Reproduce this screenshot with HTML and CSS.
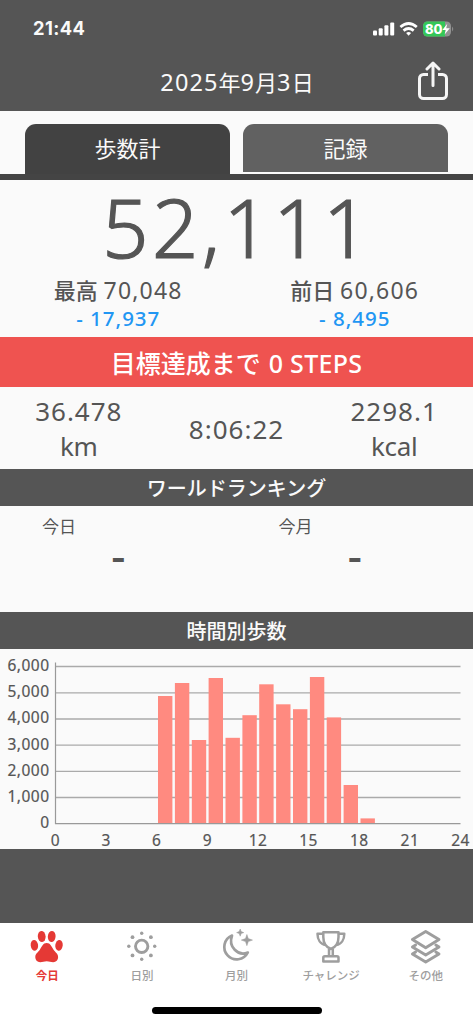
FILE: index.html
```html
<!DOCTYPE html>
<html lang="ja">
<head>
<meta charset="utf-8">
<meta name="viewport" content="width=device-width">
<title>歩数計</title>
<link rel="stylesheet" href="styles.css">
</head>
<body>
<div class="app">
  <header class="header">
    <div class="status">
      <span class="clock">21:44</span>
      <svg class="status-icons" viewBox="0 0 84 18" width="84" height="18">
        <g fill="#fff">
          <rect x="2" y="11.5" width="4" height="5" rx="1"/>
          <rect x="7.700" y="9.3" width="4" height="7.2" rx="1"/>
          <rect x="13.400" y="6.3" width="4" height="10.2" rx="1"/>
          <rect x="19.200" y="3.6" width="4" height="12.9" rx="1"/>
          <path d="M37.600 16.7l-2.5-2.7q2.5-1.9 5 0z"/>
        </g>
        <g fill="none" stroke="#fff" stroke-width="2.7">
          <path d="M29.400 8.1q8.200-7.200 16.400 0"/>
          <path d="M32.500 11.600q5.100-4.200 10.200 0"/>
        </g>
        <rect x="52" y="2.500" width="28" height="15" rx="4.500" fill="#929292"/>
        <path d="M56.500 2.500H74v15H56.500a4.500 4.500 0 0 1-4.500-4.500V7a4.500 4.500 0 0 1 4.500-4.500z" fill="#34c759"/>
        <path d="M81 7.500q2.500 2.500 0 5z" fill="#8c8c8c"/>
        <text x="54" y="14.900" class="battery-text" textLength="17.500" lengthAdjust="spacingAndGlyphs">80</text>
        <path d="M76.300 4.700l-5 6.200h3.500l-1.200 4.600 5.200-6.300h-3.600z" fill="#fff"/>
      </svg>
    </div>
    <div class="titlebar">
      <h1 class="date"><span class="n">2025</span>年<span class="n">9</span>月<span class="n">3</span>日</h1>
      <svg class="share" viewBox="0 0 32 40" width="32" height="40" fill="none" stroke="#f5f5f5" stroke-width="3" stroke-linecap="round" stroke-linejoin="round">
        <path d="M11 13.500H6.500a4 4 0 0 0-4 4V33.500a4 4 0 0 0 4 4h19a4 4 0 0 0 4-4V17.500a4 4 0 0 0-4-4H21" stroke-linecap="butt"/>
        <path d="M16 24.500V2.500M10 8l6-6 6 6"/>
      </svg>
    </div>
  </header>

  <nav class="tabs">
    <div class="tab active">歩数計</div>
    <div class="tab">記録</div>
  </nav>

  <section class="summary">
    <div class="total">52,111</div>
    <div class="compare">
      <div>
        <div class="cmp-main">最高 <span class="n">70,048</span></div>
        <div class="cmp-diff">- 17,937</div>
      </div>
      <div>
        <div class="cmp-main">前日 <span class="n">60,606</span></div>
        <div class="cmp-diff">- 8,495</div>
      </div>
    </div>
  </section>

  <div class="goal">目標達成まで<span class="n">0 STEPS</span></div>

  <section class="stats">
    <div>36.478<br><span class="unit">km</span></div>
    <div>8:06:22</div>
    <div>2298.1<br><span class="unit">kcal</span></div>
  </section>

  <h2 class="bar">ワールドランキング</h2>
  <section class="ranking">
    <div class="rank"><div class="rank-label">今日</div><div class="rank-value">-</div></div>
    <div class="rank"><div class="rank-label">今月</div><div class="rank-value">-</div></div>
  </section>

  <h2 class="bar">時間別歩数</h2>
  <section class="chart">
    <svg width="473" height="200" viewBox="0 649 473 200">
      <g stroke="#aaa" stroke-width="1.3">
        <path d="M55 666.500H460.500M55 692.800H460.500M55 719H460.500M55 745.200H460.500M55 771.400H460.500M55 797.500H460.500"/>
      </g>
      <g fill="#ff8a80">
        <rect x="158" y="696" width="14.400" height="127.500"/>
        <rect x="174.900" y="683" width="14.400" height="140.500"/>
        <rect x="191.800" y="740" width="14.400" height="83.500"/>
        <rect x="208.600" y="678" width="14.400" height="145.500"/>
        <rect x="225.500" y="737.800" width="14.400" height="85.700"/>
        <rect x="242.400" y="715.200" width="14.400" height="108.300"/>
        <rect x="259.200" y="684.300" width="14.400" height="139.200"/>
        <rect x="276.100" y="704.300" width="14.400" height="119.200"/>
        <rect x="293" y="709.200" width="14.400" height="114.300"/>
        <rect x="309.900" y="677" width="14.400" height="146.500"/>
        <rect x="326.700" y="717.400" width="14.400" height="106.100"/>
        <rect x="343.600" y="785" width="14.400" height="38.500"/>
        <rect x="360.500" y="818.400" width="14.400" height="5.100"/>
      </g>
      <path d="M55.500 662.500V823.600H460.500" fill="none" stroke="#999" stroke-width="1.200"/>
      <g class="axis" text-anchor="end">
        <text x="49.500" y="671">6,000</text>
        <text x="49.500" y="697.200">5,000</text>
        <text x="49.500" y="723.400">4,000</text>
        <text x="49.500" y="749.600">3,000</text>
        <text x="49.500" y="775.800">2,000</text>
        <text x="49.500" y="802">1,000</text>
        <text x="49.500" y="828.200">0</text>
      </g>
      <g class="axis" text-anchor="middle">
        <text x="55.500" y="845.700">0</text>
        <text x="106.100" y="845.700">3</text>
        <text x="156.700" y="845.700">6</text>
        <text x="207.400" y="845.700">9</text>
        <text x="258" y="845.700">12</text>
        <text x="308.600" y="845.700">15</text>
        <text x="359.300" y="845.700">18</text>
        <text x="409.900" y="845.700">21</text>
        <text x="460.500" y="845.700">24</text>
      </g>
    </svg>
  </section>

  <footer class="tabbar">
    <div class="items">
      <div class="item on">
        <svg viewBox="0 0 36 36" fill="#e53935">
          <ellipse cx="12.700" cy="8.500" rx="3.900" ry="5.600" transform="rotate(-5 12.700 8.500)"/>
          <ellipse cx="22.700" cy="8.500" rx="3.900" ry="5.600" transform="rotate(5 22.700 8.500)"/>
          <ellipse cx="5.400" cy="17.300" rx="3.700" ry="5.400" transform="rotate(-7 5.400 17.300)"/>
          <ellipse cx="30" cy="17.300" rx="3.700" ry="5.400" transform="rotate(7 30 17.300)"/>
          <path d="M17.700 15C14 15 12.800 18.500 11 21.500 9.300 24.200 6.300 25.500 6.300 29c0 3 2 5.200 4.900 5.200 2.500 0 4-1 6.500-1s4 1 6.500 1c2.900 0 4.900-2.200 4.900-5.200 0-3.500-3-4.800-4.700-7.500C22.600 18.500 21.400 15 17.700 15z"/>
        </svg>
        <span>今日</span>
      </div>
      <div class="item">
        <svg viewBox="0 0 36 36">
          <circle cx="17.700" cy="18.300" r="6.200" fill="none" stroke="#9e9e9e" stroke-width="2.900"/>
          <g fill="#9e9e9e">
            <circle cx="17.700" cy="5.300" r="1.700"/><circle cx="17.700" cy="31.200" r="1.700"/>
            <circle cx="4.800" cy="18.300" r="1.700"/><circle cx="30.700" cy="18.300" r="1.700"/>
            <circle cx="8.500" cy="9.200" r="1.900"/><circle cx="26.900" cy="9.200" r="1.900"/>
            <circle cx="8.500" cy="27.400" r="1.900"/><circle cx="26.900" cy="27.400" r="1.900"/>
          </g>
        </svg>
        <span>日別</span>
      </div>
      <div class="item">
        <svg viewBox="0 0 36 36">
          <path d="M14 7.500A12.400 12.400 0 1 0 29.800 24.500C20 28.500 10 19 14 7.500z" fill="none" stroke="#9e9e9e" stroke-width="2.700" stroke-linejoin="round"/>
          <path d="M22.200 1l1 2.600 2.600 1-2.600 1-1 2.600-1-2.600-2.600-1 2.600-1zM28.900 6.500l1.400 4.100 4.200 1.500-4.200 1.500-1.400 4.100-1.400-4.100-4.200-1.500 4.200-1.500z" fill="#9e9e9e" stroke="#9e9e9e" stroke-width=".5"/>
        </svg>
        <span>月別</span>
      </div>
      <div class="item">
        <svg viewBox="0 0 36 36" fill="none" stroke="#9e9e9e" stroke-width="2.500" stroke-linejoin="round">
          <path d="M10.300 4.200H25.500V9c0 6.500-3.200 10.300-7.600 12C13.500 19.300 10.300 15.500 10.300 9zM10.300 5.700H4.500c0 6 3 10.500 8 11.200M25.500 5.700h5.800c0 6-3 10.500-8 11.200"/>
          <path d="M16 21v6.800M19.800 21v6.800M10.300 33.500v-3.700q0-1.600 1.600-1.600h12q1.600 0 1.600 1.600v3.700z"/>
        </svg>
        <span>チャレンジ</span>
      </div>
      <div class="item">
        <svg viewBox="0 0 36 36" fill="none" stroke="#9e9e9e" stroke-width="2.900" stroke-linejoin="round" stroke-linecap="round">
          <path d="M17.700 3.500L31 11.500 17.700 19.800 4.400 11.500z"/>
          <path d="M7.600 17L4.400 19l13.300 8L31 19l-3.200-2"/>
          <path d="M7.600 24L4.400 26l13.300 8.100L31 26l-3.200-2"/>
        </svg>
        <span>その他</span>
      </div>
    </div>
    <div class="home"></div>
  </footer>
</div>
</body>
</html>
```
FILE: styles.css
```css
* { box-sizing: border-box; }
body {
  margin: 0;
  background: #555;
  color: #555;
  font-family: "Noto Sans", "Noto Sans CJK JP", sans-serif;
}
.app {
  width: 473px;
  height: 1024px;
  display: flex;
  flex-direction: column;
  overflow: hidden;
}
h1, h2 { margin: 0; font-weight: 500; }

.header { height: 111px; background: #555; color: #fafafa; }
.status {
  height: 55px;
  padding: 1px 18px 0 33px;
  display: flex;
  align-items: center;
  justify-content: space-between;
}
.clock { font: 700 18.3px/20px Inter, sans-serif; letter-spacing: .4px; }
.status-icons { display: block; }
.battery-text { font: 800 13px Inter, sans-serif; fill: #fff; }
.titlebar {
  height: 56px;
  padding: 0 24px 3px 56px;
  display: grid;
  grid-template-columns: 1fr 32px;
  align-items: center;
}
.date { text-align: center; font-size: 22px; line-height: 30px; padding-left: 1px; font-weight: 400; }
.date .n { font-size: 23.500px; letter-spacing: 1.100px; }
.share { display: block; margin-top: -2px; }

.tabs {
  height: 69px;
  padding: 12.500px 25px 0 25px;
  display: flex;
  gap: 13px;
  background: #fafafa;
  border-bottom: 6.500px solid #444;
}
.tab {
  flex: 1;
  height: 48.500px;
  border-radius: 11px 11px 0 0;
  background: #616161;
  color: #fafafa;
  text-align: center;
  font-size: 22px;
  line-height: 49px;
}
.tab.active { height: 50px; background: #424242; }

.summary { height: 157px; background: #fafafa; text-align: center; }
.total {
  height: 97px;
  padding-left: 2px;
  font-size: 81px;
  line-height: 93px;
  font-weight: 300;
  letter-spacing: 3.500px;
  -webkit-text-stroke: 1.200px #555;
  stroke-linejoin: round;
}
.compare { display: grid; grid-template-columns: 1fr 1fr; }
.cmp-main { font-size: 22px; line-height: 27px; font-weight: 500; }
.cmp-main .n { font-size: 23px; font-weight: 400; letter-spacing: 1.200px; }
.cmp-diff { font-size: 20.500px; line-height: 28px; letter-spacing: 1px; color: #2196f3; font-weight: 500; }

.goal {
  height: 50px;
  background: #ef5350;
  color: #fff;
  text-align: center;
  font-size: 25px;
  line-height: 52px;
  font-weight: 500;
}
.goal .n { font-size: 25px; letter-spacing: .300px; margin-left: 8px; }

.stats {
  height: 81.500px;
  padding-top: 3px;
  display: grid;
  grid-template-columns: 1fr 1fr 1fr;
  align-items: center;
  background: #fafafa;
  text-align: center;
  font-size: 26px;
  line-height: 35.500px;
  letter-spacing: 1px;
}
.unit { letter-spacing: -.300px; }

.bar {
  height: 37px;
  background: #555;
  color: #fafafa;
  text-align: center;
  font-size: 20px;
  line-height: 40px;
}
.ranking {
  height: 106.500px;
  display: grid;
  grid-template-columns: 1fr 1fr;
  background: #fafafa;
}
.rank { padding-top: 7px; }
.rank-label { padding-left: 42px; font-size: 17px; line-height: 27px; }
.rank-value { text-align: center; font-size: 44px; line-height: 31px; font-weight: 500; }

.chart { height: 199.500px; background: #fafafa; }
.chart svg { display: block; }
.axis { font-size: 15.500px; letter-spacing: .500px; fill: #555; stroke: #555; stroke-width: .2px; }

.tabbar {
  margin-top: auto;
  height: 101px;
  background: #fff;
  display: flex;
  flex-direction: column;
  align-items: center;
  justify-content: space-between;
  padding: 5px 0 10px;
}
.items { width: 473px; display: grid; grid-template-columns: repeat(5, 1fr); }
.item {
  display: flex;
  flex-direction: column;
  align-items: center;
  color: #9e9e9e;
  font-size: 11.500px;
  line-height: 18px;
  font-weight: 500;
}
.item svg { width: 36px; height: 36px; display: block; margin-bottom: 3px; }
.item.on { color: #e53935; font-weight: 700; }
.home { width: 170px; height: 7px; border-radius: 4px; background: #000; }
```
